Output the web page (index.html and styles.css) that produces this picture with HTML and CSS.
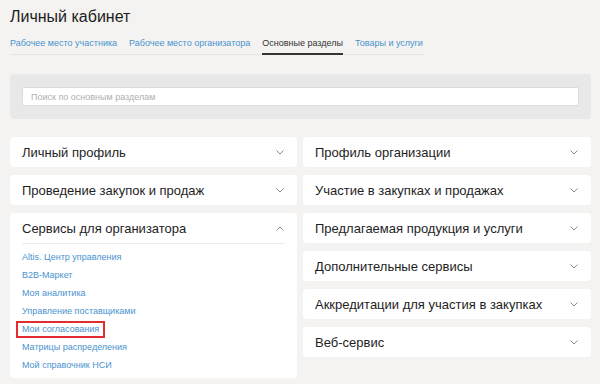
FILE: index.html
```html
<!DOCTYPE html>
<html lang="ru">
<head>
<meta charset="UTF-8" />
<meta name="viewport" content="width=device-width, initial-scale=1" />
<title>Личный кабинет</title>
<link rel="stylesheet" href="styles.css">
</head>
<body>

<div class="page">
  <h1>Личный кабинет</h1>

  <div class="tabs">
    <a class="tab">Рабочее место участника</a>
    <a class="tab">Рабочее место организатора</a>
    <a class="tab active">Основные разделы</a>
    <a class="tab">Товары и услуги</a>
  </div>

  <div class="search">
    <input type="text" placeholder="Поиск по основным разделам" />
  </div>

  <div class="sections">
    <div class="col">
      <div class="card">
        <div class="card-head">Личный профиль <svg class="chev" viewBox="0 0 8 5"><path d="M0.5 0.5 L4 4 L7.5 0.5"/></svg></div>
      </div>
      <div class="card">
        <div class="card-head">Проведение закупок и продаж <svg class="chev" viewBox="0 0 8 5"><path d="M0.5 0.5 L4 4 L7.5 0.5"/></svg></div>
      </div>
      <div class="card open">
        <div class="card-head">Сервисы для организатора <svg class="chev" viewBox="0 0 8 5"><path d="M0.5 4.5 L4 1 L7.5 4.5"/></svg></div>
        <div class="links">
          <a class="link">Altis. Центр управления</a>
          <a class="link">B2B-Маркет</a>
          <a class="link">Моя аналитика</a>
          <a class="link">Управление поставщиками</a>
          <a class="link"><span class="mark">Мои согласования</span></a>
          <a class="link">Матрицы распределения</a>
          <a class="link">Мой справочник НСИ</a>
        </div>
      </div>
    </div>

    <div class="col">
      <div class="card">
        <div class="card-head">Профиль организации <svg class="chev" viewBox="0 0 8 5"><path d="M0.5 0.5 L4 4 L7.5 0.5"/></svg></div>
      </div>
      <div class="card">
        <div class="card-head">Участие в закупках и продажах <svg class="chev" viewBox="0 0 8 5"><path d="M0.5 0.5 L4 4 L7.5 0.5"/></svg></div>
      </div>
      <div class="card">
        <div class="card-head">Предлагаемая продукция и услуги <svg class="chev" viewBox="0 0 8 5"><path d="M0.5 0.5 L4 4 L7.5 0.5"/></svg></div>
      </div>
      <div class="card">
        <div class="card-head">Дополнительные сервисы <svg class="chev" viewBox="0 0 8 5"><path d="M0.5 0.5 L4 4 L7.5 0.5"/></svg></div>
      </div>
      <div class="card">
        <div class="card-head">Аккредитации для участия в закупках <svg class="chev" viewBox="0 0 8 5"><path d="M0.5 0.5 L4 4 L7.5 0.5"/></svg></div>
      </div>
      <div class="card">
        <div class="card-head">Веб-сервис <svg class="chev" viewBox="0 0 8 5"><path d="M0.5 0.5 L4 4 L7.5 0.5"/></svg></div>
      </div>
    </div>
  </div>
</div>

</body>
</html>
```

FILE: styles.css
```css
body {
  margin: 0; padding: 0;
  background: #f4f3f1;
  color: #222;
  font-family: 'Liberation Sans', Arial, sans-serif;
  overflow: hidden;
}
.page {
  margin: 0 9px 0 10px;
}
h1 {
  margin: 0;
  padding-top: 6px;
  font-size: 16px;
  line-height: 22px;
  font-weight: 400;
  color: #1e1e1e;
}
.tabs {
  display: flex;
  gap: 12px;
  width: max-content;
  margin-top: 8px;
  border-bottom: 1px solid #e6e5e3;
}
.tab {
  font-size: 9px;
  line-height: 14px;
  padding-bottom: 3px;
  color: #4a93cf;
  border-bottom: 2px solid transparent;
  margin-bottom: -1px;
  white-space: nowrap;
}
.tab.active {
  color: #333;
  border-bottom-color: #333;
}
.search {
  margin-top: 19px;
  background: #e8e8e8;
  border-radius: 4px;
  padding: 13px 12px;
}
.search input {
  display: block;
  box-sizing: border-box;
  width: 100%;
  height: 19px;
  border: 1px solid #dcdcdc;
  border-radius: 2px;
  background: #fff;
  padding: 0 8px;
  font-family: inherit;
  font-size: 9px;
  color: #333;
  outline: none;
}
.search input::placeholder {
  color: #b0b0b0;
}
.sections {
  display: grid;
  grid-template-columns: 287px 1fr;
  gap: 6px;
  margin-top: 18px;
  align-items: start;
}
.col {
  display: flex;
  flex-direction: column;
  gap: 8px;
}
.card {
  background: #fff;
  border-radius: 4px;
}
.card-head {
  display: flex;
  justify-content: space-between;
  align-items: center;
  height: 30px;
  padding: 0 13px 0 12px;
  font-size: 13px;
  color: #1e1e1e;
}
.chev {
  width: 8px;
  height: 5px;
  fill: none;
  stroke: #8a8a8a;
  stroke-width: 1;
}
.card.open .card-head {
  height: 30px;
  margin: 0 12px;
  padding: 0;
  padding-right: 1px;
  border-bottom: 1px solid #ececec;
}
.links {
  display: flex;
  flex-direction: column;
  padding: 4px 12px 4px;
}
.link {
  font-size: 9px;
  line-height: 18px;
  height: 18px;
  color: #4a93cf;
  white-space: nowrap;
}
.mark {
  display: inline-block;
  line-height: 13px;
  margin-left: -6px;
  padding: 0 4px;
  border: 2px solid #e22c30;
  vertical-align: middle;
}
```
